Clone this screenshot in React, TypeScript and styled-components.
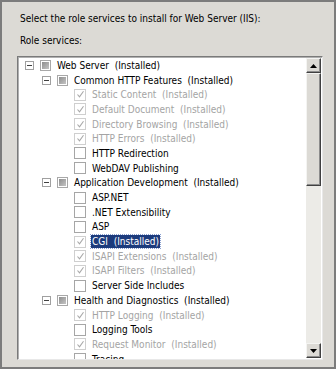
import React, { FC } from "react";
import styled, { createGlobalStyle } from "styled-components";

const GlobalStyle = createGlobalStyle`
  html, body {
    margin: 0;
    padding: 0;
    background: #dcdad5;
  }
`;

type Item = {
  label: string;
  level: number;
  parent?: boolean;
  checked?: boolean;
  installed?: boolean;
  selected?: boolean;
};

const items: Item[] = [
  { label: "Web Server", level: 0, parent: true, installed: true },
  { label: "Common HTTP Features", level: 1, parent: true, installed: true },
  { label: "Static Content", level: 2, checked: true, installed: true },
  { label: "Default Document", level: 2, checked: true, installed: true },
  { label: "Directory Browsing", level: 2, checked: true, installed: true },
  { label: "HTTP Errors", level: 2, checked: true, installed: true },
  { label: "HTTP Redirection", level: 2 },
  { label: "WebDAV Publishing", level: 2 },
  { label: "Application Development", level: 1, parent: true, installed: true },
  { label: "ASP.NET", level: 2 },
  { label: ".NET Extensibility", level: 2 },
  { label: "ASP", level: 2 },
  { label: "CGI", level: 2, checked: true, installed: true, selected: true },
  { label: "ISAPI Extensions", level: 2, checked: true, installed: true },
  { label: "ISAPI Filters", level: 2, checked: true, installed: true },
  { label: "Server Side Includes", level: 2 },
  { label: "Health and Diagnostics", level: 1, parent: true, installed: true },
  { label: "HTTP Logging", level: 2, checked: true, installed: true },
  { label: "Logging Tools", level: 2 },
  { label: "Request Monitor", level: 2, checked: true, installed: true },
  { label: "Tracing", level: 2 },
];

const App: FC = () => {
  return (
    <>
      <GlobalStyle />
      <Frame>
        <Caption>Select the role services to install for Web Server (IIS):</Caption>
        <Caption>Role services:</Caption>
        <TreeBox>
          <TreeList>
            {items.map((it) => (
              <Row key={it.label} level={it.level}>
                <ExpanderSlot>{it.parent && <Expander />}</ExpanderSlot>
                {it.parent ? (
                  <MixedBox>
                    <span />
                  </MixedBox>
                ) : (
                  <CheckBox disabled={!!it.checked}>
                    {it.checked && (
                      <svg width="9" height="9" viewBox="0 0 9 9">
                        <path d="M1.5 4.5 L3.5 6.8 L7.5 1.2" fill="none" stroke="#a8a8a8" strokeWidth="1.1" />
                      </svg>
                    )}
                  </CheckBox>
                )}
                <Label grey={!!it.checked} selected={!!it.selected}>
                  {it.label}
                  {it.installed ? "  (Installed)" : ""}
                </Label>
              </Row>
            ))}
          </TreeList>
          <ScrollBar>
            <ScrollButton>
              <svg width="7" height="4" viewBox="0 0 7 4">
                <path d="M0 4 L3.5 0 L7 4 Z" fill="#000" />
              </svg>
            </ScrollButton>
            <Thumb />
            <Track />
            <ScrollButton>
              <svg width="7" height="4" viewBox="0 0 7 4">
                <path d="M0 0 L7 0 L3.5 4 Z" fill="#000" />
              </svg>
            </ScrollButton>
          </ScrollBar>
        </TreeBox>
      </Frame>
    </>
  );
};

export default App;

const Frame = styled.div`
  width: 336px;
  height: 369px;
  box-sizing: border-box;
  border: 2px solid #7c7c7c;
  background: #dcdad5;
  padding: 10px 11px 7px 15px;
  display: flex;
  flex-direction: column;
  font-family: "DejaVu Sans Condensed", "DejaVu Sans", sans-serif;
  font-stretch: condensed;
  font-size: 10px;
  color: #000;
`;

const Caption = styled.div`
  height: 14px;
  line-height: 14px;
  padding-left: 3px;
  margin-bottom: 8px;
  &:last-of-type {
    margin-bottom: 1px;
  }
`;

const TreeBox = styled.div`
  flex: 1;
  display: flex;
  background: #fff;
  border: 1px solid #7a7a7a;
  border-right-color: #e8e8e8;
  border-bottom-color: #e8e8e8;
  box-shadow: inset 1px 1px 0 #b0b0b0;
  overflow: hidden;
`;

const TreeList = styled.div`
  flex: 1;
  padding-top: 1px;
  overflow: hidden;
`;

const Row = styled.div<{ level: number }>`
  display: flex;
  align-items: center;
  height: 14.7px;
  padding-left: ${(p) => 7 + p.level * 17}px;
  white-space: pre;
`;

const ExpanderSlot = styled.div`
  width: 9px;
  height: 9px;
  margin-right: 6px;
  flex: none;
`;

const Expander = styled.div`
  width: 9px;
  height: 9px;
  box-sizing: border-box;
  border: 1px solid #a0a0a0;
  background: #fff;
  position: relative;
  &::after {
    content: "";
    position: absolute;
    left: 1px;
    top: 3px;
    width: 5px;
    height: 1px;
    background: #404040;
  }
`;

const MixedBox = styled.div`
  width: 11px;
  height: 11px;
  box-sizing: border-box;
  border: 1px solid #a8a8a8;
  background: #fff;
  display: flex;
  align-items: center;
  justify-content: center;
  flex: none;
  span {
    width: 7px;
    height: 7px;
    background: linear-gradient(135deg, #8e8e8e, #c4c4c4);
  }
`;

const CheckBox = styled.div<{ disabled: boolean }>`
  width: 12px;
  height: 12px;
  box-sizing: border-box;
  border: 1px solid ${(p) => (p.disabled ? "#cfcfcf" : "#a6a6a6")};
  background: #fff;
  display: flex;
  align-items: center;
  justify-content: center;
  flex: none;
`;

const Label = styled.span<{ grey: boolean; selected: boolean }>`
  margin-left: 5px;
  color: ${(p) => (p.selected ? "#fff" : p.grey ? "#a4a4a4" : "#000")};
  background: ${(p) => (p.selected ? "#1c3b7c" : "transparent")};
  outline: ${(p) => (p.selected ? "1px dotted #8aa0d0" : "none")};
  padding: 0 1px;
  line-height: 13px;
`;

const ScrollBar = styled.div`
  width: 15px;
  display: flex;
  flex-direction: column;
  background: #ecebe7;
  flex: none;
  margin: 1px 1px 1px 0;
`;

const raised = `
  box-sizing: border-box;
  background: #dcdad5;
  border: 1px solid;
  border-color: #f4f4f2 #404040 #404040 #f4f4f2;
  box-shadow: inset -1px -1px 0 #8c8c8c;
`;

const ScrollButton = styled.div`
  ${raised}
  height: 15px;
  display: flex;
  align-items: center;
  justify-content: center;
  flex: none;
`;

const Thumb = styled.div`
  ${raised}
  height: 113px;
  flex: none;
`;

const Track = styled.div`
  flex: 1;
  background: #ecebe7;
`;
